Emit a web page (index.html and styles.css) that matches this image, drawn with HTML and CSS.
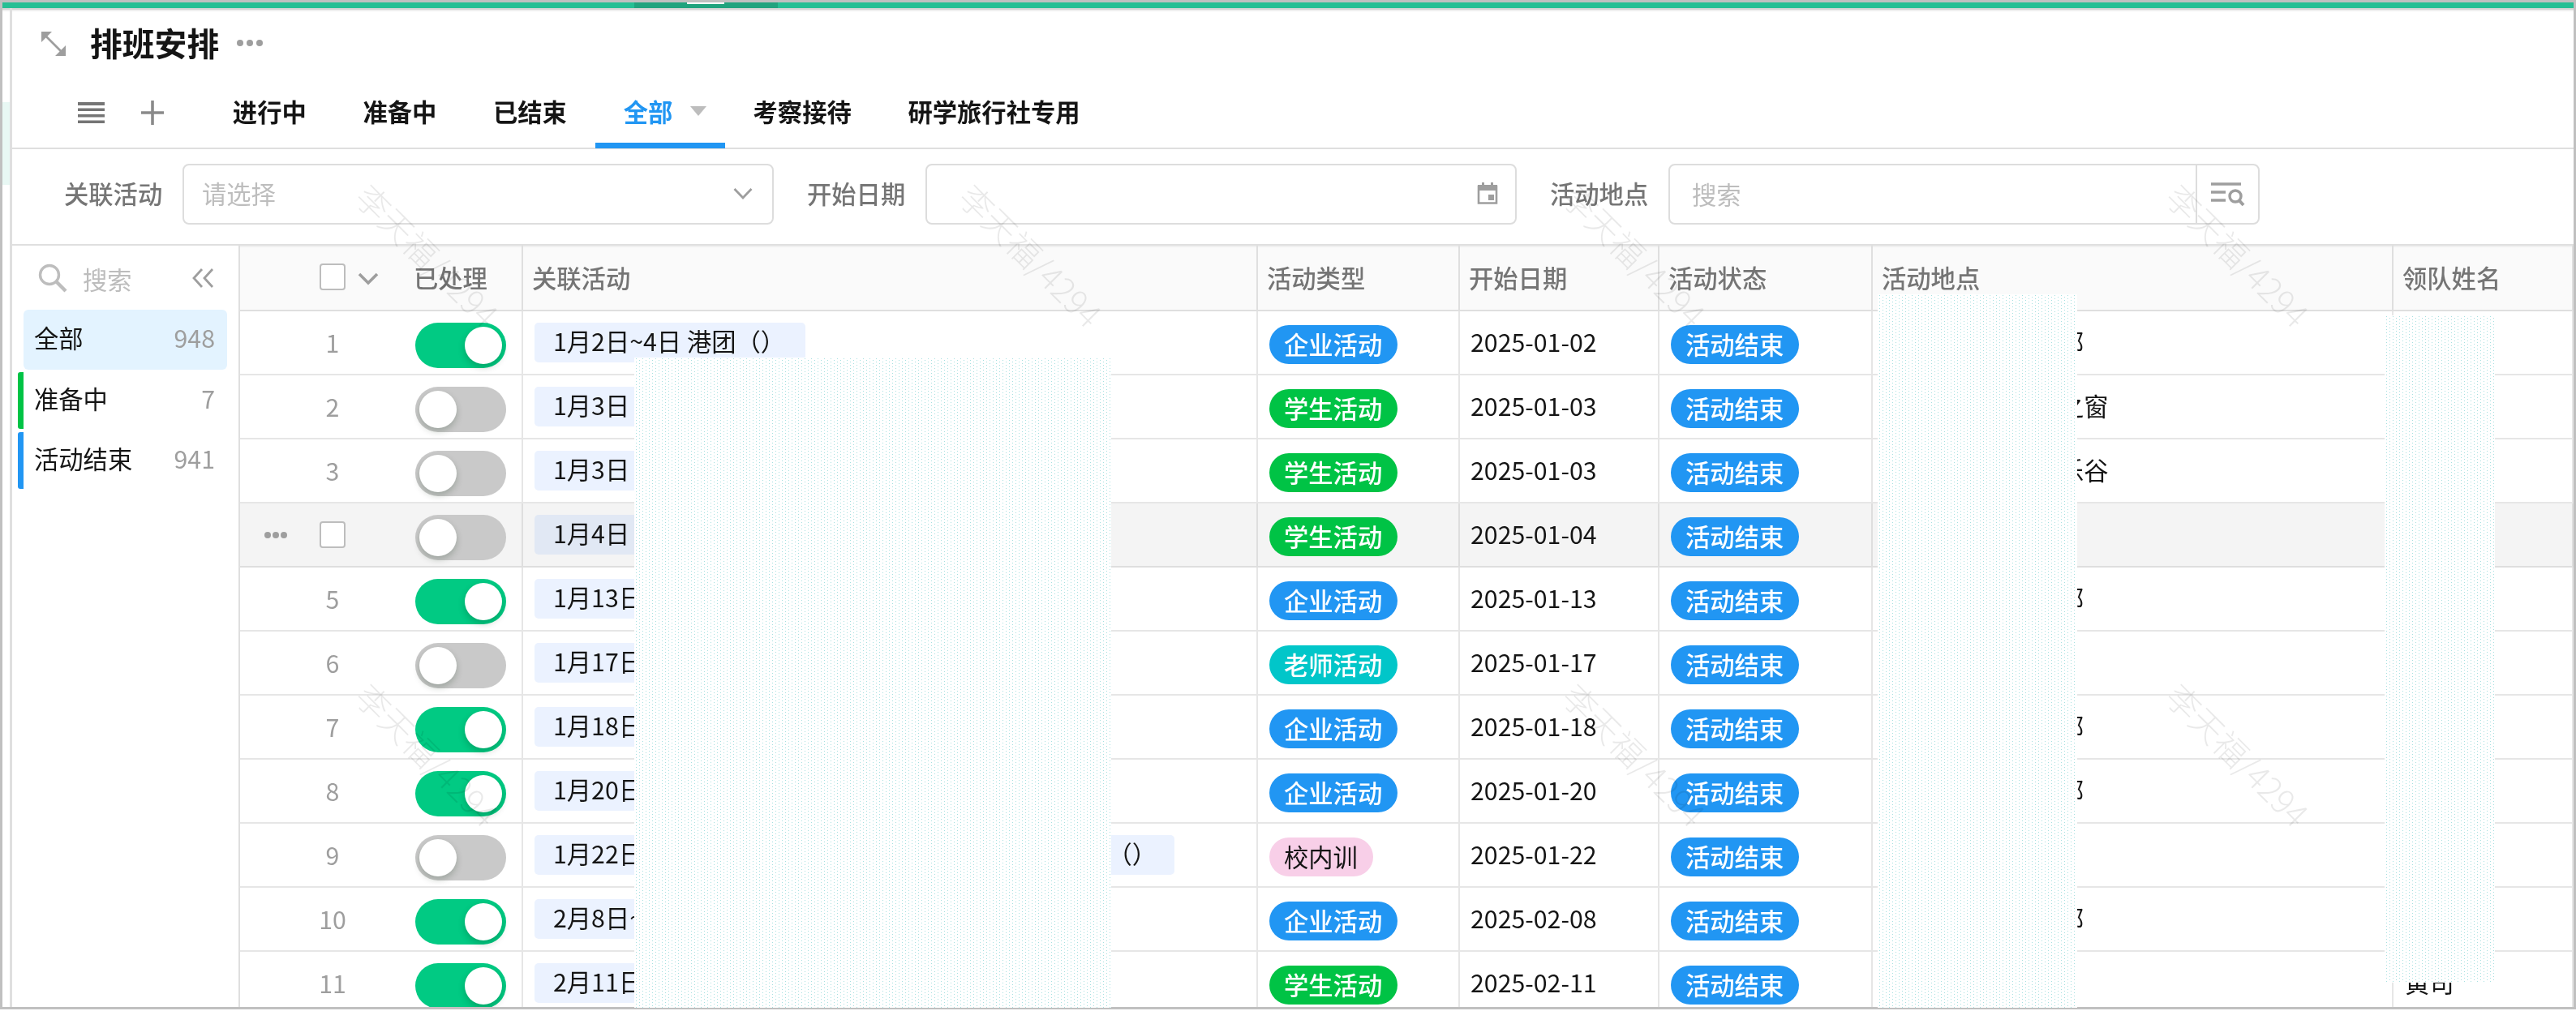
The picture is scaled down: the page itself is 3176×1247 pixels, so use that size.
FILE: index.html
```html
<!DOCTYPE html>
<html lang="zh-CN">
<head>
<meta charset="utf-8">
<title>排班安排</title>
<link rel="stylesheet" href="styles.css">
</head>
<body>
<div class="frame">
  <div class="topbar"><div class="topbar-tab"><i></i></div></div>
  <div class="body">
    <div class="rail"><div class="rail-active"></div></div>
    <main class="panel">
      <header class="title-row">
        <svg class="expand" width="34" height="34" viewBox="0 0 34 34"><path d="M8 8L27 27" stroke="#9e9e9e" stroke-width="2.6"/><path d="M2 2h13L2 15zM32 32V19L19 32z" fill="#9e9e9e"/></svg>
        <h1>排班安排</h1>
        <svg class="more" width="34" height="10" viewBox="0 0 34 10" fill="#9e9e9e"><circle cx="5" cy="5" r="4"/><circle cx="17" cy="5" r="4"/><circle cx="29" cy="5" r="4"/></svg>
      </header>
      <nav class="tabs">
        <svg class="menu" width="34" height="28" viewBox="0 0 34 28" fill="#757575"><path d="M0 1h33v4H0zM0 8.500h33v3.500H0zM0 16h33v3.500H0zM0 23.500h33v3.500H0z"/></svg>
        <svg class="plus" width="30" height="30" viewBox="0 0 30 30" stroke="#8a8a8a" stroke-width="3.600"><path d="M15 0v30M1 15h28"/></svg>
        <a class="tab">进行中</a><a class="tab">准备中</a><a class="tab">已结束</a>
        <a class="tab active">全部<svg width="20" height="12" viewBox="0 0 20 12"><path d="M0 0h20L10 12z" fill="#bdbdbd"/></svg></a>
        <a class="tab">考察接待</a><a class="tab">研学旅行社专用</a>
      </nav>
      <section class="filters">
        <label>关联活动</label>
        <div class="field"><span>请选择</span><svg width="24" height="16" viewBox="0 0 24 16"><path d="M1.500 2L12 13L22.500 2" fill="none" stroke="#9e9e9e" stroke-width="2.800"/></svg></div>
        <label>开始日期</label>
        <div class="field"><span></span><svg class="cal" width="28" height="30" viewBox="0 0 28 30"><path d="M3 6h22v20.500H3z" fill="none" stroke="#9e9e9e" stroke-width="2.600"/><path d="M2 4h24v7H2zM7 1h3v4H7zM18 1h3v4h-3zM15 16h7v7h-7z" fill="#9e9e9e"/></svg></div>
        <label>活动地点</label>
        <div class="field search"><span>搜索</span><div class="mode"><svg width="44" height="32" viewBox="0 0 44 32" fill="none" stroke="#9e9e9e"><path d="M1 4h37M1 14h18M1 24h18" stroke-width="3.400"/><circle cx="31" cy="19" r="7" stroke-width="3.400"/><path d="M35.500 24L41 30" stroke-width="4"/></svg></div></div>
      </section>
      <div class="content">
        <aside class="side">
          <div class="side-search">
            <svg width="36" height="36" viewBox="0 0 36 36" fill="none" stroke="#bdbdbd"><circle cx="14" cy="14" r="11.500" stroke-width="3.400"/><path d="M22 22L34 34" stroke-width="4.400"/></svg>
            <span>搜索</span>
            <svg class="fold" width="28" height="24" viewBox="0 0 28 24" fill="none" stroke="#9e9e9e" stroke-width="2.800"><path d="M13 1L3 12L13 23M26 1L16 12L26 23"/></svg>
          </div>
          <div class="group on"><b>全部</b><em>948</em></div>
          <div class="group ready"><b>准备中</b><em>7</em></div>
          <div class="group done"><b>活动结束</b><em>941</em></div>
        </aside>
        <section class="table" id="table">
          <div class="row head">
            <div class="cell first"><span class="num"><i class="box"></i></span><svg class="chev" width="26" height="16" viewBox="0 0 26 16"><path d="M2 2L13 13L24 2" fill="none" stroke="#9e9e9e" stroke-width="3.600"/></svg><span class="handled">已处理</span></div>
            <div class="cell">关联活动</div><div class="cell">活动类型</div><div class="cell">开始日期</div><div class="cell">活动状态</div><div class="cell">活动地点</div><div class="cell">领队姓名</div>
          </div>
        </section>
      </div>
    </main>
  </div>
</div>
<div class="marks">
  <span style="left:528px;top:314px">李天福/4294</span><span style="left:1272px;top:314px">李天福/4294</span><span style="left:2016px;top:314px">李天福/4294</span><span style="left:2760px;top:314px">李天福/4294</span>
  <span style="left:528px;top:930px">李天福/4294</span><span style="left:2016px;top:930px">李天福/4294</span><span style="left:2760px;top:930px">李天福/4294</span>
</div>
<div class="mask mask-name"></div>
<div class="mask mask-place"></div>
<div class="mask mask-leader"></div>
<script src="rows.js"></script>
</body>
</html>
```
FILE: rows.js
```js
const rows = [
  [1, '1月2日~4日 港团（）', 'firm', '2025-01-02', '部'],
  [0, '1月3日', 'student', '2025-01-03', '之窗'],
  [0, '1月3日', 'student', '2025-01-03', '乐谷'],
  [0, '1月4日', 'student', '2025-01-04', ''],
  [1, '1月13日', 'firm', '2025-01-13', '部'],
  [0, '1月17日', 'teacher', '2025-01-17', ''],
  [1, '1月18日', 'firm', '2025-01-18', '部'],
  [1, '1月20日', 'firm', '2025-01-20', '部'],
  [0, '1月22日', 'inner', '2025-01-22', ''],
  [1, '2月8日~', 'firm', '2025-02-08', '部'],
  [1, '2月11日', 'student', '2025-02-11', '']
];
const types = { firm: '企业活动', student: '学生活动', teacher: '老师活动', inner: '校内训' };
const dots = '<svg class="rowmore" width="30" height="10" viewBox="0 0 30 10" fill="#9e9e9e"><circle cx="5" cy="5" r="4"/><circle cx="15" cy="5" r="4"/><circle cx="25" cy="5" r="4"/></svg>';
document.getElementById('table').insertAdjacentHTML('beforeend', rows.map((r, i) => {
  const hover = i === 3;
  const wide = i === 8;
  return `<div class="row${hover ? ' hover' : ''}">
    <div class="cell first">${hover ? dots : ''}<span class="num">${hover ? '<i class="box"></i>' : i + 1}</span><span class="toggle${r[0] ? ' on' : ''}"></span></div>
    <div class="cell rel"><span class="chip${wide ? ' wide' : ''}">${r[1]}${wide ? '<span>（）</span>' : ''}</span></div>
    <div class="cell tag"><span class="pill ${r[2]}">${types[r[2]]}</span></div>
    <div class="cell date">${r[3]}</div>
    <div class="cell tag"><span class="pill firm">活动结束</span></div>
    <div class="cell place">${r[4]}</div>
    <div class="cell leader">${i === 10 ? '黄司' : ''}</div>
  </div>`;
}).join(''));
```
FILE: styles.css
```css
* { box-sizing: border-box; }
html, body { margin: 0; height: 1247px; overflow: hidden; background: #fff; }
body { position: relative; font: 30.3px/40px "Noto Sans CJK SC", "Noto Sans", sans-serif; color: #151515; white-space: nowrap; }
svg { display: block; flex: none; }
.frame { width: 3176px; height: 1245px; border: 3px solid #c0c0c0; display: flex; flex-direction: column; overflow: hidden; }
.topbar { height: 7px; flex: none; background: #26bf94; padding-left: 779px; }
.topbar-tab { width: 177px; height: 7px; background: #21a37e; padding-left: 65px; }
.topbar-tab i { display: block; width: 46px; height: 2px; background: #fff; }
.body { flex: 1; min-height: 0; display: flex; box-shadow: inset 0 2px #d4d4d4, inset 0 4px #efefef; }
.rail { width: 12px; flex: none; border-right: 3px solid #dfdfdf; padding-top: 116px; }
.rail-active { height: 102px; background: #e8f8f4; }
.panel { flex: 1; min-width: 0; display: flex; flex-direction: column; }
.title-row { height: 88px; flex: none; display: flex; align-items: center; padding-left: 34px; }
h1 { margin: -2px 20px 2px 28px; font-size: 39.800px; line-height: 50px; font-weight: 700; width: 160px; }
.more { margin-top: -2px; }
.tabs { height: 86px; flex: none; display: flex; align-items: center; padding-left: 81px; border-bottom: 2px solid #dfdfdf; }
.menu { margin: -2px 43px 0 0; }
.plus { margin: -2px 49px 0 0; }
.tab { height: 86px; padding: 0 34.850px 7px; display: flex; align-items: center; font-weight: 700; }
.tab.active { width: 160px; color: #2196f3; border-bottom: 7px solid #2196f3; padding: 0 0 0 35px; gap: 22px; }
.filters { height: 119px; flex: none; display: flex; align-items: center; border-bottom: 2px solid #dfdfdf; padding: 0 0 7px 64px; color: #757575; }
.filters label { width: 146px; font-weight: 500; padding-bottom: 2px; }
.field { width: 729px; height: 75px; margin-right: 41px; border: 2px solid #ddd; border-radius: 8px; display: flex; align-items: center; justify-content: space-between; padding: 0 24px 0 22px; color: #bdbdbd; }
.field > span { margin-top: -2px; }
.field .cal { margin-right: -4px; }
.field.search { padding: 0 0 0 27px; }
.field.search > span { margin-top: 0; }
.mode { width: 77px; height: 71px; border-left: 2px solid #ddd; display: flex; align-items: center; justify-content: center; }
.content { flex: 1; min-height: 0; display: flex; }
.side { width: 281px; flex: none; border-right: 2px solid #dfdfdf; padding: 0 14px 0 7px; }
.side-search { height: 79px; display: flex; align-items: center; padding: 0 16px 0 25px; color: #bdbdbd; }
.side-search span { margin-left: 19px; padding-top: 3px; }
.fold { margin-left: auto; }
.group { display: flex; align-items: center; justify-content: space-between; height: 70px; margin-bottom: 4px; border-left: 7px solid transparent; padding: 0 15px 7px 13px; }
.group b { font-weight: 400; }
.group em { font-style: normal; color: #9e9e9e; }
.group.on { height: 74px; margin: 0 0 3px 7px; border: 0; background: #e3f3ff; border-radius: 6px; padding-bottom: 7px; }
.group.ready { border-color: #00c345; border-radius: 3px 0 0 3px; }
.group.done { border-color: #2196f3; border-radius: 3px 0 0 3px; }
.table { flex: 1; min-width: 0; overflow: hidden; }
.row { height: 79px; display: grid; grid-template-columns: 349px 906px 249px 246px 263px 642px 222px; border-bottom: 2px solid #e6e6e6; }
.cell { display: flex; align-items: center; min-width: 0; overflow: hidden; border-right: 2px solid #e6e6e6; padding-left: 11px; }
.head { height: 81px; background: #fafafa; color: #757575; font-weight: 500; border-color: #dfdfdf; box-shadow: inset 0 2px #f0f0f0; }
.head .cell { border-color: #dfdfdf; padding-bottom: 2px; }
.cell.first { padding-left: 84px; overflow: visible; }
.num { width: 60px; flex: none; text-align: center; color: #9e9e9e; padding-bottom: 1px; }
.box { display: block; margin: auto; width: 32px; height: 33px; border: 2px solid #bdbdbd; border-radius: 4px; background: #fff; }
.chev { margin: 4px 0 0 1px; }
.handled { margin-left: 43px; }
.hover .cell.first { padding-left: 29px; }
.rowmore { margin-right: 25px; }
.toggle { width: 112px; height: 56px; margin: 7px 0 0 72px; border-radius: 28px; background: #c9c9c9; padding: 5px; flex: none; }
.toggle::after { content: ""; display: block; width: 46px; height: 46px; border-radius: 50%; background: #fff; box-shadow: 0 4px 8px rgba(0,35,11,.22); }
.toggle.on { background: #01ca83; }
.toggle.on::after { margin-left: auto; }
.cell.rel { padding-left: 14px; }
.chip { height: 49px; line-height: 45px; border-radius: 5px; background: #ebf2ff; padding: 0 25px 0 23px; }
.chip.wide { width: 789px; display: flex; justify-content: space-between; padding-right: 22px; }
.hover { background: #f4f4f4; }
.hover .chip { background: #e1e8f4; }
.hover .cell, .hover { border-color: #dedede; }
.cell.tag { padding: 5px 0 0 14px; }
.pill { height: 48px; line-height: 46px; border-radius: 24px; padding: 0 19px 0 18px; color: #fff; font-weight: 500; }
.firm { background: #2196f3; }
.student { background: #00c345; }
.teacher { background: #01c6c9; }
.inner { background: #f8cfe8; color: #151515; font-weight: 400; }
.cell.date { padding: 0 0 3px 13px; }
.cell.place { padding: 0 0 4px 230px; }
.cell.leader { padding: 0 0 3px 14px; }
.marks span { position: absolute; transform: translate(-50%, -50%) rotate(45deg); font-size: 41px; line-height: 44px; font-weight: 300; color: rgba(0,0,0,.085); }
/* staggered one-pixel dots: two 8x4 lattices, the second shifted by half a cell */
.mask { position: absolute; background: #fff; }
.mask::before, .mask::after {
  content: "";
  position: absolute;
  inset: 0;
  background:
    linear-gradient(#fff 0 3px, transparent 3px) 0 -2px / 8px 4px,
    linear-gradient(90deg, #fff 0 7px, #a6e0e0 7px) -5px 0 / 8px 4px;
}
.mask::after {
  background-position: 0 0, -1px 0;
  mix-blend-mode: multiply;
}
.mask-name { left: 782px; top: 441px; width: 588px; height: 802px; }
.mask-place { left: 2315px; top: 363px; width: 246px; height: 880px; }
.mask-leader { left: 2940px; top: 389px; width: 136px; height: 823px; }
```
